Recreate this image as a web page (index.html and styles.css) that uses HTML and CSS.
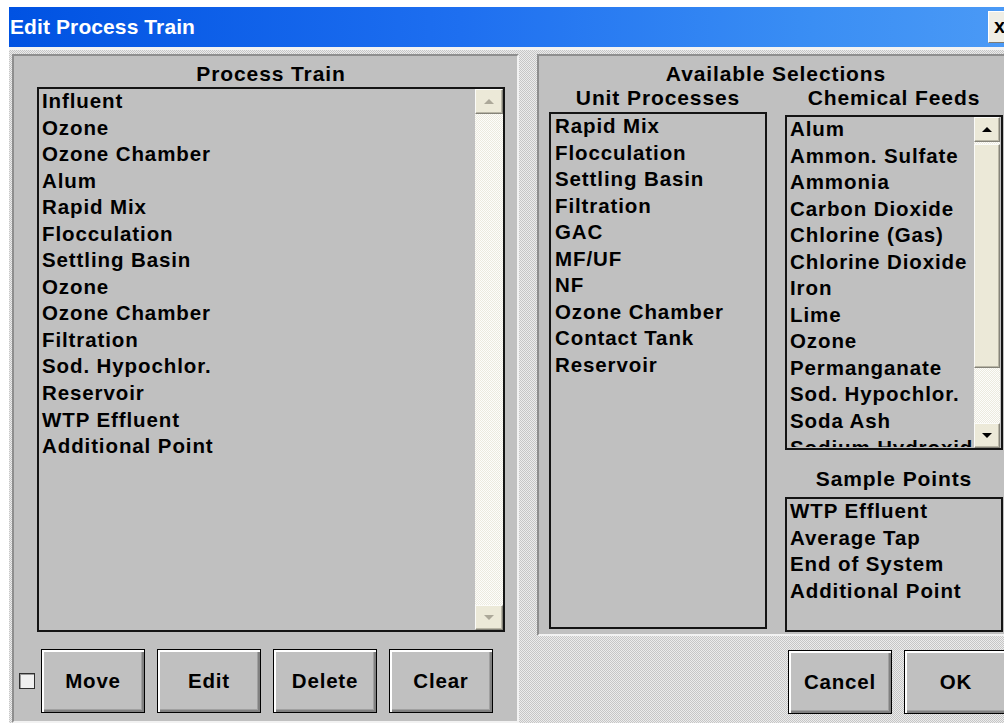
FILE: index.html
```html
<!DOCTYPE html>
<html lang="en">
<head>
<meta charset="utf-8">
<title>Edit Process Train</title>
<link rel="stylesheet" href="styles.css">
</head>
<body>
<div class="window">
  <div class="titlebar">
    <span class="title">Edit Process Train</span>
    <span class="close">x</span>
  </div>
  <div class="sep"></div>
  <div class="client">
    <section class="panel train">
      <h2 class="heading">Process Train</h2>
      <div class="listbox train-list">
        <ul class="items">
          <li>Influent</li>
          <li>Ozone</li>
          <li>Ozone Chamber</li>
          <li>Alum</li>
          <li>Rapid Mix</li>
          <li>Flocculation</li>
          <li>Settling Basin</li>
          <li>Ozone</li>
          <li>Ozone Chamber</li>
          <li>Filtration</li>
          <li>Sod. Hypochlor.</li>
          <li>Reservoir</li>
          <li>WTP Effluent</li>
          <li>Additional Point</li>
        </ul>
        <div class="scrollbar disabled">
          <span class="sb-btn up"><span class="arrow"></span></span>
          <span class="sb-track"></span>
          <span class="sb-btn down"><span class="arrow"></span></span>
        </div>
      </div>
      <div class="actions">
        <span class="checkbox"></span>
        <button class="btn">Move</button>
        <button class="btn">Edit</button>
        <button class="btn">Delete</button>
        <button class="btn">Clear</button>
      </div>
    </section>

    <div class="right-col">
      <section class="panel selections">
        <h2 class="heading">Available Selections</h2>
        <div class="columns">
          <div class="col">
            <h3 class="heading">Unit Processes</h3>
            <div class="listbox unit-list">
              <ul class="items">
                <li>Rapid Mix</li>
                <li>Flocculation</li>
                <li>Settling Basin</li>
                <li>Filtration</li>
                <li>GAC</li>
                <li>MF/UF</li>
                <li>NF</li>
                <li>Ozone Chamber</li>
                <li>Contact Tank</li>
                <li>Reservoir</li>
              </ul>
            </div>
          </div>
          <div class="col">
            <h3 class="heading">Chemical Feeds</h3>
            <div class="listbox chem-list">
              <ul class="items">
                <li>Alum</li>
                <li>Ammon. Sulfate</li>
                <li>Ammonia</li>
                <li>Carbon Dioxide</li>
                <li>Chlorine (Gas)</li>
                <li>Chlorine Dioxide</li>
                <li>Iron</li>
                <li>Lime</li>
                <li>Ozone</li>
                <li>Permanganate</li>
                <li>Sod. Hypochlor.</li>
                <li>Soda Ash</li>
                <li>Sodium Hydroxide</li>
              </ul>
              <div class="scrollbar">
                <span class="sb-btn up"><span class="arrow"></span></span>
                <span class="sb-track">
                  <span class="sb-thumb"></span>
                </span>
                <span class="sb-btn down"><span class="arrow"></span></span>
              </div>
            </div>
            <h3 class="heading sample-heading">Sample Points</h3>
            <div class="listbox sample-list">
              <ul class="items">
                <li>WTP Effluent</li>
                <li>Average Tap</li>
                <li>End of System</li>
                <li>Additional Point</li>
              </ul>
            </div>
          </div>
        </div>
      </section>
      <div class="dialog-buttons">
        <button class="btn">Cancel</button>
        <button class="btn">OK</button>
      </div>
    </div>
  </div>
</div>
</body>
</html>
```

FILE: styles.css
```css
html, body {
  margin: 0;
  padding: 0;
  background: #ffffff;
  overflow: hidden;
}

body {
  font-family: "Liberation Sans", Arial, sans-serif;
  font-weight: bold;
  color: #000;
}

.window {
  margin: 7px 0 0 9px;
  width: 1003px;
}

/* caption bar */
.titlebar {
  height: 40px;
  display: flex;
  align-items: center;
  justify-content: space-between;
  background: linear-gradient(90deg, #0052e2 0%, #1e6ff0 45%, #3a8ef4 80%, #4b9af6 100%);
}

.title {
  padding-left: 1px;
  color: #fff;
  font-size: 21px;
  letter-spacing: 0.1px;
}

.close {
  box-sizing: border-box;
  width: 22px;
  height: 32px;
  margin-right: 2px;
  padding-left: 5px;
  background: #efeee6;
  border: 1px solid;
  border-color: #ffffff #7d7b72 #7d7b72 #ffffff;
  font-size: 20px;
  line-height: 28px;
  color: #000;
}

.sep {
  height: 3px;
  background: #f3f3f3;
}

/* dithered client area */
.client {
  display: flex;
  align-items: flex-start;
  gap: 18px;
  height: 673px;
  box-sizing: border-box;
  padding: 4px 0 0 3px;
  background: repeating-conic-gradient(#c6c6c6 0 25%, #ececec 0 50%) 0 0 / 2px 2px;
}

.panel {
  box-sizing: border-box;
  background: #c0c0c0;
  border: 2px solid;
  border-color: #8e8e8e #f2f2f2 #f2f2f2 #8e8e8e;
}

.heading {
  margin: 0;
  font-size: 21px;
  line-height: 24px;
  text-align: center;
  letter-spacing: 0.9px;
  font-weight: bold;
}

/* list boxes */
.listbox {
  box-sizing: border-box;
  display: flex;
  border: 2px solid #141414;
  background: #c0c0c0;
}

.items {
  flex: 1;
  margin: 0;
  padding: 0 0 0 3px;
  list-style: none;
  overflow: hidden;
  font-size: 20.5px;
  line-height: 26.55px;
  letter-spacing: 0.9px;
  white-space: nowrap;
  position: relative;
  top: -1px;
}

/* scroll bars */
.scrollbar {
  display: flex;
  flex-direction: column;
  width: 27px;
  background: repeating-conic-gradient(#fdfdfb 0 25%, #eceadf 0 50%) 0 0 / 2px 2px;
}

.sb-btn {
  box-sizing: border-box;
  height: 25px;
  display: flex;
  align-items: center;
  justify-content: center;
  background: #ece9d8;
  border: 1px solid;
  border-color: #fbfbf8 #858379 #858379 #fbfbf8;
  box-shadow: inset -1px -1px #b9b6a6;
}

.sb-track {
  flex: 1;
  position: relative;
}

.sb-thumb {
  position: absolute;
  left: 0;
  right: 0;
  top: 2px;
  height: 224px;
  box-sizing: border-box;
  background: #ece9d8;
  border: 1px solid;
  border-color: #fbfbf8 #858379 #858379 #fbfbf8;
  box-shadow: inset -1px -1px #b9b6a6;
}

.arrow {
  width: 0;
  height: 0;
  border-left: 5px solid transparent;
  border-right: 5px solid transparent;
}

.up .arrow {
  border-bottom: 5px solid #000;
}

.down .arrow {
  border-top: 5px solid #000;
}

.disabled .up .arrow {
  border-bottom-color: #aca899;
}

.disabled .down .arrow {
  border-top-color: #aca899;
}

/* left panel */
.train {
  width: 507px;
  height: 669px;
  padding: 6px 12px 0 23px;
  display: flex;
  flex-direction: column;
}

.train .heading {
  margin-bottom: 1px;
}

.train-list {
  height: 545px;
}

.train-list .scrollbar {
  width: 28px;
}

.actions {
  display: flex;
  align-items: center;
  gap: 12px;
  height: 64px;
  margin: 17px 0 0 -18px;
}

.checkbox {
  box-sizing: border-box;
  width: 16px;
  height: 16px;
  margin-right: -6px;
  background: #f0f0f0;
  border: 1px solid #303030;
  box-shadow: inset 1px 1px #9a9a9a;
}

.btn {
  box-sizing: border-box;
  width: 104px;
  height: 64px;
  padding: 0;
  background: #c0c0c0;
  border: 1px solid #000;
  box-shadow: inset 2px 2px #ffffff, inset -2px -2px #808080, inset -3px -3px #a0a0a0;
  font-family: "Liberation Sans", Arial, sans-serif;
  font-weight: bold;
  font-size: 20.5px;
  letter-spacing: 0.8px;
  color: #000;
}

/* right column */
.right-col {
  width: 475px;
  display: flex;
  flex-direction: column;
}

.selections {
  height: 582px;
  padding: 6px 7px 0 10px;
}

.columns {
  display: flex;
  gap: 18px;
}

.col {
  width: 218px;
  display: flex;
  flex-direction: column;
}

.unit-list {
  margin-top: 2px;
  height: 517px;
}

.unit-list .items {
  padding-left: 4px;
}

.chem-list {
  margin-top: 5px;
  height: 335px;
}

.chem-list .scrollbar {
  width: 26px;
  margin-right: 1px;
}

.sample-heading {
  margin-top: 17px;
}

.sample-list {
  margin-top: 6px;
  height: 135px;
}

.dialog-buttons {
  display: flex;
  justify-content: flex-end;
  gap: 12px;
  margin-top: 14px;
  padding-right: 4px;
}
```
